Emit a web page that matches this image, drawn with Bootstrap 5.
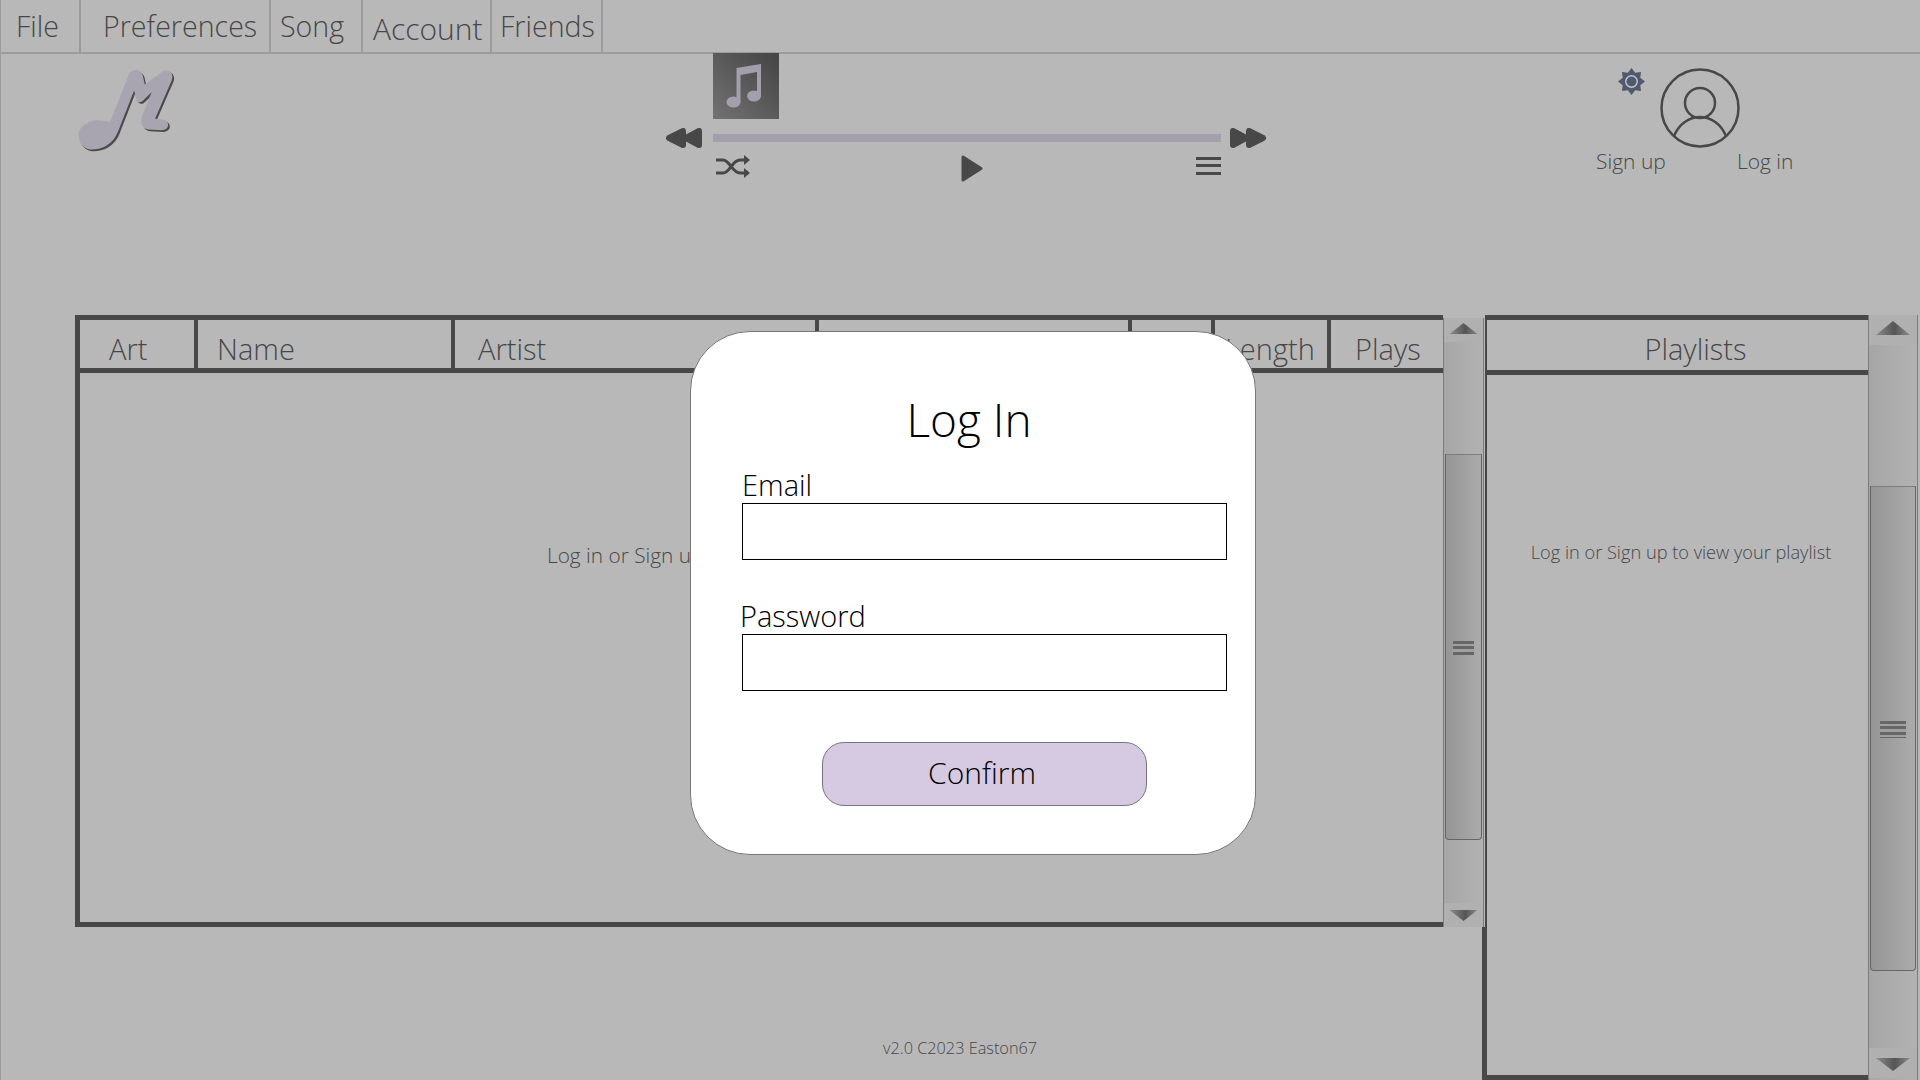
<!DOCTYPE html>
<html lang="en">
<head>
    <meta charset="UTF-8">
    <meta name="viewport" content="width=device-width, initial-scale=1.0">
    <title>Music Player</title>
    <link href="https://cdn.jsdelivr.net/npm/bootstrap@5.3.3/dist/css/bootstrap.min.css" rel="stylesheet">
    <style>
        body, html {
            height: 100%;
            margin: 0;
            overflow: hidden;
        }
        body {
            background: #b8b8b8;
            color: #474747;
            font-family: 'Open Sans', 'Liberation Sans', sans-serif;
            font-weight: 300;
        }
        .app-shell {
            height: 1080px;
            border-left: 1px solid #9c9c9c;
            position: relative;
        }

        /* menu bar */
        .menu-bar {
            height: 54px;
            border-bottom: 2px solid #9c9c9c;
            font-size: 28.6px;
            line-height: 51px;
        }
        .menu-item {
            border-right: 2px solid #9c9c9c;
            height: 52px;
        }
        .menu-item:nth-child(1) { width: 80px; padding-left: 15px; }
        .menu-item:nth-child(2) { width: 190px; padding-left: 22px; }
        .menu-item:nth-child(3) { width: 92px; padding-left: 9px; }
        .menu-item:nth-child(4) { width: 129px; padding-left: 10px; padding-top: 3px; font-size: 30px; }
        .menu-item:nth-child(5) { width: 111px; padding-left: 8px; }

        /* top row */
        .top-row { height: 261px; }
        .logo-box { width: 664px; padding: 13px 0 0 76px; }
        .player-grid {
            display: grid;
            grid-template-columns: 48px 508px 46px;
            grid-template-rows: 65px 8px 27px;
            row-gap: 15px;
            width: 602px;
        }
        .player-grid > .skip-back { grid-column: 1; grid-row: 2; margin-top: -6px; }
        .player-grid > .skip-fwd { grid-column: 3; grid-row: 2; margin: -6px 0 0 9px; }
        .player-grid svg { display: block; }
        .album-art {
            grid-column: 2;
            grid-row: 1;
            width: 66px;
            height: 66px;
            margin-top: -1px;
            background: linear-gradient(45deg, #727272, #444444);
        }
        .song-progress {
            grid-column: 2;
            grid-row: 2;
            background: #a49fad;
        }
        .player-btns {
            grid-column: 2;
            grid-row: 3;
            padding-left: 3px;
            margin-top: -2px;
        }
        .play-btn { margin-right: 2px; }
        .queue-lines {
            width: 25px;
            height: 18px;
            margin-top: 2px;
            background: repeating-linear-gradient(#484848 0 3px, transparent 3px 7.5px);
        }
        .account-box {
            margin-left: 329px;
            font-size: 21px;
            line-height: 28px;
        }
        .account-icons { padding: 14px 0 0 22px; gap: 15px; }
        .account-links { gap: 71px; margin-top: -1px; }

        /* lists */
        .left-col { width: 1484px; }
        .main-row { height: 765px; }
        .song-row { height: 612px; padding-left: 74px; }
        .song-table {
            width: 1368px;
            border: solid #484848;
            border-width: 5px 0 5px 5px;
        }
        .head-row {
            height: 53px;
            border-bottom: 5px solid #484848;
            font-size: 29px;
            line-height: 58px;
        }
        .head-cell { border-right: 4px solid #484848; white-space: nowrap; overflow: hidden; }
        .head-cell:last-child { border-right: 0; }
        .cell-art { width: 118px; padding-left: 29px; }
        .cell-name { width: 257px; padding-left: 19px; }
        .cell-artist { width: 364px; padding-left: 23px; }
        .cell-album { width: 313px; padding-left: 20px; }
        .cell-year { width: 83px; padding-left: 12px; }
        .cell-length { width: 116px; padding-left: 10px; }
        .cell-plays { flex: 1; padding-left: 24px; }
        .empty-songs {
            font-size: 20.8px;
            padding: 167px 0 0 467px;
        }
        .foot-note {
            height: 153px;
            border-right: 3px solid #484848;
            font-size: 16.3px;
            padding: 109px 0 0 882px;
        }

        .list-panel {
            width: 383px;
            border-left: 2px solid #484848;
            border-top: 5px solid #484848;
            border-bottom: 5px solid #484848;
        }
        .panel-head {
            height: 55px;
            border-bottom: 5px solid #484848;
            font-size: 29px;
            line-height: 58px;
            text-align: center;
            padding-left: 36px;
        }
        .empty-list {
            font-size: 18.2px;
            text-align: center;
            padding: 164px 0 0 7px;
        }

        /* scroll bars */
        .scroll-bar {
            border-left: 1px solid #7c7c7c;
            border-right: 1px solid #7c7c7c;
            background: linear-gradient(90deg, #a6a6a6, #b2b2b2);
        }
        .scroll-small { width: 41px; margin-top: 3px; height: 609px; }
        .scroll-big { width: 50px; height: 765px; }
        .scroll-end {
            background: #b0b0b0;
            display: flex;
            justify-content: center;
        }
        .scroll-small .scroll-end { height: 24px; }
        .scroll-big .scroll-end { height: 30px; }
        .scroll-thumb {
            background: linear-gradient(90deg, #959595, #ababab);
            border: 1px solid #666666;
            border-top-color: #7c7c7c;
            border-radius: 0 0 4px 4px;
            display: flex;
            align-items: center;
            justify-content: center;
            padding-top: 2px;
        }
        .scroll-small .scroll-thumb { height: 386px; margin: 112px 1px 63px; }
        .scroll-big .scroll-thumb { height: 485px; margin: 141px 1px 77px; }
        .grip {
            background: repeating-linear-gradient(#666666 0 3px, #a0a0a0 3px 5.5px);
        }
        .scroll-small .grip { width: 21px; height: 14px; }
        .scroll-big .grip { width: 26px; height: 17px; }
        .arrow-up, .arrow-down {
            background: linear-gradient(90deg, #8a8a8a, #555555 55%, #8a8a8a);
        }
        .arrow-up { clip-path: polygon(50% 0, 100% 100%, 0 100%); }
        .arrow-down { clip-path: polygon(0 0, 100% 0, 50% 100%); }
        .scroll-small .arrow-up { width: 28px; height: 11px; margin-top: 5px; }
        .scroll-small .arrow-down { width: 28px; height: 11px; margin-top: 7px; }
        .scroll-big .arrow-up { width: 34px; height: 14px; margin-top: 6px; }
        .scroll-big .arrow-down { width: 34px; height: 13px; margin-top: 10px; }

        /* log in dialog */
        .login-box {
            position: absolute;
            left: 689px;
            top: 331px;
            width: 566px;
            height: 524px;
            background: #fff;
            border: 1px solid #777777;
            border-radius: 60px;
            color: #000;
            padding: 0 27px 0 51px;
        }
        .login-title {
            font-size: 46px;
            font-weight: 300;
            line-height: 60px;
            text-align: center;
            margin: 57px 0 19px -32px;
        }
        .login-label {
            font-size: 29px;
            line-height: 33px;
            padding-bottom: 2px;
            margin: 0;
            display: block;
        }
        .login-label-pass {
            margin: 39px 0 0 -2px;
        }
        .login-input {
            border: 1px solid #000;
            border-radius: 0;
            height: 57px;
            width: 485px;
        }
        .login-btn {
            display: block;
            width: 325px;
            height: 64px;
            margin: 51px 0 0 80px;
            background: #d6cae3;
            border: 1px solid #77737f;
            border-radius: 22px;
            color: #000;
            font-size: 30px;
            font-weight: 300;
            padding: 0 5px 4px 0;
        }
    </style>
</head>
<body>
    <div class="app-shell">
        <nav class="menu-bar d-flex">
            <div class="menu-item">File</div>
            <div class="menu-item">Preferences</div>
            <div class="menu-item">Song</div>
            <div class="menu-item">Account</div>
            <div class="menu-item">Friends</div>
        </nav>

        <div class="top-row d-flex">
            <div class="logo-box">
                <svg width="98" height="85" viewBox="50 50 295 255">
                    <defs>
                        <path id="logoShape" d="M55 255C55 225 90 208 120 210L150 215L205 75C212 55 240 52 248 75L254 102L305 65C320 52 345 65 335 90L285 205L310 208C330 212 330 238 305 240L265 238C248 235 240 220 245 200L275 125L250 150C240 160 228 155 228 145L222 120L175 240C160 285 120 300 90 298C70 295 55 280 55 255Z"/>
                    </defs>
                    <use href="#logoShape" fill="#4a4a4a" transform="translate(5 5)"/>
                    <use href="#logoShape" fill="#a8a4b0"/>
                </svg>
            </div>

            <div class="player-grid">
                <div class="album-art">
                    <svg width="66" height="66" viewBox="0 0 66 66" fill="#a49fad">
                        <ellipse cx="20.5" cy="49" rx="7" ry="5.5"/>
                        <ellipse cx="41" cy="43" rx="7" ry="5.5"/>
                        <path d="M23.5 15L48 11V44H44V19L27.5 22V50H23.5Z"/>
                    </svg>
                </div>
                <div class="skip-back">
                    <svg width="37" height="20" viewBox="0 0 37 20" fill="#484848" stroke="#484848" stroke-width="6" stroke-linejoin="round">
                        <polygon points="34,3 34,17 21,10"/>
                        <polygon points="18,3 18,17 4,10"/>
                    </svg>
                </div>
                <div class="song-progress"></div>
                <div class="skip-fwd">
                    <svg width="37" height="20" viewBox="0 0 37 20" fill="#484848" stroke="#484848" stroke-width="6" stroke-linejoin="round">
                        <polygon points="3,3 3,17 16,10"/>
                        <polygon points="19,3 19,17 33,10"/>
                    </svg>
                </div>
                <div class="player-btns d-flex justify-content-between">
                    <svg width="34" height="23" viewBox="0 0 34 23" fill="none" stroke="#484848" stroke-width="3">
                        <path d="M0 5H7C14 5 16 18 24 18H30"/>
                        <path d="M0 18H7C14 18 16 5 24 5H30"/>
                        <polygon points="28,0 34,5 28,10" fill="#484848" stroke="none"/>
                        <polygon points="28,13 34,18 28,23" fill="#484848" stroke="none"/>
                    </svg>
                    <svg class="play-btn" width="22" height="27" viewBox="0 0 22 27" fill="#484848" stroke="#484848" stroke-width="3" stroke-linejoin="round">
                        <polygon points="2,2 2,25 20,13.5"/>
                    </svg>
                    <div class="queue-lines"></div>
                </div>
            </div>

            <div class="account-box">
                <div class="account-icons d-flex">
                    <svg width="27" height="27" viewBox="0 0 27 27">
                        <polygon fill="#4f5a6e" points="13.5,0 17.14,4.72 23.05,3.95 22.28,9.86 27,13.5 22.28,17.14 23.05,23.05 17.14,22.28 13.5,27 9.86,22.28 3.95,23.05 4.72,17.14 0,13.5 4.72,9.86 3.95,3.95 9.86,4.72"/>
                        <circle cx="13.5" cy="13.5" r="6.5" fill="#c4c6ca"/>
                        <circle cx="13.5" cy="13.5" r="5" fill="#4f5a6e"/>
                    </svg>
                    <svg width="80" height="80" viewBox="0 0 80 80" fill="none" stroke="#484848" stroke-width="2.5">
                        <circle cx="40" cy="40" r="38.5"/>
                        <circle cx="40" cy="35" r="15"/>
                        <path d="M14 68C19 56 29 49 40 49C51 49 61 56 66 68"/>
                    </svg>
                </div>
                <div class="account-links d-flex">
                    <span>Sign up</span>
                    <span>Log in</span>
                </div>
            </div>
        </div>

        <div class="main-row d-flex">
            <div class="left-col">
                <div class="song-row d-flex">
                    <div class="song-table">
                        <div class="head-row d-flex">
                            <div class="head-cell cell-art">Art</div>
                            <div class="head-cell cell-name">Name</div>
                            <div class="head-cell cell-artist">Artist</div>
                            <div class="head-cell cell-album">Album</div>
                            <div class="head-cell cell-year">Year</div>
                            <div class="head-cell cell-length">Length</div>
                            <div class="head-cell cell-plays">Plays</div>
                        </div>
                        <div class="empty-songs">Log in or Sign up to view your songs</div>
                    </div>
                    <div class="scroll-bar scroll-small">
                        <div class="scroll-end"><div class="arrow-up"></div></div>
                        <div class="scroll-thumb"><div class="grip"></div></div>
                        <div class="scroll-end"><div class="arrow-down"></div></div>
                    </div>
                </div>
                <div class="foot-note">v2.0 C2023 Easton67</div>
            </div>

            <div class="list-panel">
                <div class="panel-head">Playlists</div>
                <div class="empty-list">Log in or Sign up to view your playlist</div>
            </div>
            <div class="scroll-bar scroll-big">
                <div class="scroll-end"><div class="arrow-up"></div></div>
                <div class="scroll-thumb"><div class="grip"></div></div>
                <div class="scroll-end"><div class="arrow-down"></div></div>
            </div>
        </div>

        <form class="login-box">
            <h2 class="login-title">Log In</h2>
            <label class="login-label" for="email">Email</label>
            <input class="form-control login-input" id="email" type="email">
            <label class="login-label login-label-pass" for="password">Password</label>
            <input class="form-control login-input" id="password" type="password">
            <button class="btn login-btn" type="button">Confirm</button>
        </form>
    </div>
    <script src="https://cdn.jsdelivr.net/npm/bootstrap@5.3.3/dist/js/bootstrap.bundle.min.js"></script>
</body>
</html>
